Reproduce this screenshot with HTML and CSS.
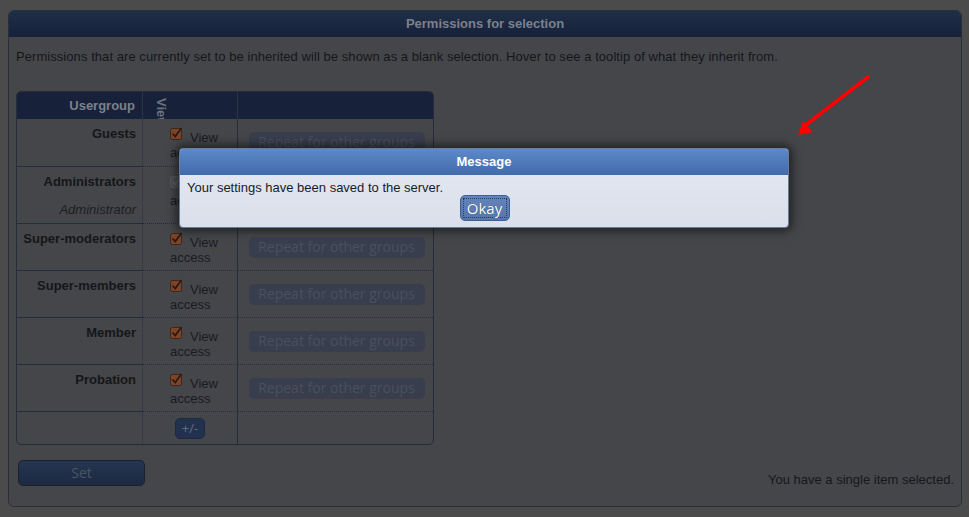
FILE: index.html
```html
<!DOCTYPE html>
<html>
<head>
<meta charset="utf-8">
<title>Permissions</title>
<link rel="stylesheet" href="styles.css">
</head>
<body>
<div class="panel">
  <div class="panel-head">Permissions for selection</div>
  <div class="panel-body">
    <p class="desc">Permissions that are currently set to be inherited will be shown as a blank selection. Hover to see a tooltip of what they inherit from.</p>
    <div class="table-wrap">
      <table class="perm">
        <colgroup><col class="w1"><col class="w2"><col class="w3"></colgroup>
        <thead>
          <tr><th class="c1">Usergroup</th><th class="c2"><div class="vert">View access</div></th><th class="c3"></th></tr>
        </thead>
        <tbody>
          <tr class="std">
            <td class="c1"><b>Guests</b></td>
            <td class="c2"><span class="cb"><svg viewBox="0 0 13 13" width="13" height="13"><rect x="0.5" y="1.5" width="11" height="11" rx="2" fill="#7e4427" stroke="#3d2517"/><path d="M2.5 6.5 L5.2 9.5 L11.5 1" fill="none" stroke="#2a1a12" stroke-width="1.8"/></svg></span>View access</td>
            <td class="c3"><span class="rep">Repeat for other groups</span></td>
          </tr>
          <tr class="admin">
            <td class="c1"><b>Administrators</b><div class="sub">Administrator</div></td>
            <td class="c2"><span class="cb"><svg viewBox="0 0 13 13" width="13" height="13"><rect x="0.5" y="1.5" width="11" height="11" rx="2" fill="#4d4f53" stroke="#57595e"/><path d="M2.5 6.5 L5.2 9.5 L11.5 1" fill="none" stroke="#5d5f64" stroke-width="1.8"/></svg></span>View access</td>
            <td class="c3"><span class="rep">Repeat for other groups</span></td>
          </tr>
          <tr class="std">
            <td class="c1"><b>Super-moderators</b></td>
            <td class="c2"><span class="cb"><svg viewBox="0 0 13 13" width="13" height="13"><rect x="0.5" y="1.5" width="11" height="11" rx="2" fill="#7e4427" stroke="#3d2517"/><path d="M2.5 6.5 L5.2 9.5 L11.5 1" fill="none" stroke="#2a1a12" stroke-width="1.8"/></svg></span>View access</td>
            <td class="c3"><span class="rep">Repeat for other groups</span></td>
          </tr>
          <tr class="std">
            <td class="c1"><b>Super-members</b></td>
            <td class="c2"><span class="cb"><svg viewBox="0 0 13 13" width="13" height="13"><rect x="0.5" y="1.5" width="11" height="11" rx="2" fill="#7e4427" stroke="#3d2517"/><path d="M2.5 6.5 L5.2 9.5 L11.5 1" fill="none" stroke="#2a1a12" stroke-width="1.8"/></svg></span>View access</td>
            <td class="c3"><span class="rep">Repeat for other groups</span></td>
          </tr>
          <tr class="std">
            <td class="c1"><b>Member</b></td>
            <td class="c2"><span class="cb"><svg viewBox="0 0 13 13" width="13" height="13"><rect x="0.5" y="1.5" width="11" height="11" rx="2" fill="#7e4427" stroke="#3d2517"/><path d="M2.5 6.5 L5.2 9.5 L11.5 1" fill="none" stroke="#2a1a12" stroke-width="1.8"/></svg></span>View access</td>
            <td class="c3"><span class="rep">Repeat for other groups</span></td>
          </tr>
          <tr class="std">
            <td class="c1"><b>Probation</b></td>
            <td class="c2"><span class="cb"><svg viewBox="0 0 13 13" width="13" height="13"><rect x="0.5" y="1.5" width="11" height="11" rx="2" fill="#7e4427" stroke="#3d2517"/><path d="M2.5 6.5 L5.2 9.5 L11.5 1" fill="none" stroke="#2a1a12" stroke-width="1.8"/></svg></span>View access</td>
            <td class="c3"><span class="rep">Repeat for other groups</span></td>
          </tr>
          <tr class="last">
            <td class="c1"></td>
            <td class="c2 mid"><span class="pm">+/-</span></td>
            <td class="c3"></td>
          </tr>
        </tbody>
      </table>
    </div>
    <div class="footer">
      <span class="set">Set</span>
      <span class="status">You have a single item selected.</span>
    </div>
  </div>
</div>

<div class="dialog">
  <div class="dialog-head">Message</div>
  <div class="dialog-body">
    <p class="msg">Your settings have been saved to the server.</p>
    <div class="dialog-actions"><span class="okay"><span class="focus">Okay</span></span></div>
  </div>
</div>

<svg class="arrow" width="90" height="70" viewBox="0 0 90 70">
  <line x1="78" y1="6" x2="13" y2="56" stroke="#ff0000" stroke-width="3.5" stroke-linecap="round"/>
  <polygon points="8,64 13,50 23,61" fill="#ff0000"/>
</svg>
</body>
</html>
```

FILE: styles.css
```css
* { box-sizing: border-box; }
html, body { margin: 0; padding: 0; }
body {
  background: #4b4b4c;
  font-family: "Liberation Sans", Arial, sans-serif;
  font-size: 13px;
  color: #151619;
  width: 969px;
  height: 517px;
  overflow: hidden;
  position: relative;
}
.panel {
  margin: 10px 7px 0 8px;
  height: 497px;
  border: 1px solid #2a2e36;
  border-radius: 6px;
  background: #45464a;
  overflow: hidden;
}
.panel-head {
  height: 26px;
  background: linear-gradient(#1f2e47, #16213a);
  color: #7b818c;
  font-weight: bold;
  text-align: center;
  line-height: 25px;
  font-size: 13px;
}
.panel-body {
  padding: 0 7px;
}
.desc {
  margin: 12px 0 0 0;
  line-height: 15px;
  letter-spacing: 0.06px;
}
.table-wrap {
  margin-top: 27px;
  width: 418px;
  border: 1px solid #262c38;
  border-radius: 5px;
  overflow: hidden;
}
.perm {
  width: 100%;
  table-layout: fixed;
  border-collapse: separate;
  border-spacing: 0;
}
.w1 { width: 126px; }
.w2 { width: 95px; }
.perm thead tr { height: 27px; }
.perm th {
  background: #17223a;
  color: #7b818c;
  font-weight: bold;
  padding: 0;
  vertical-align: middle;
}
.perm th.c1 { text-align: right; padding-right: 7px; border-right: 1px solid #2a3445; }
.perm th.c2 { border-right: 1px solid #2a3445; text-align: left; vertical-align: top; }
.vert {
  writing-mode: vertical-rl;
  white-space: nowrap;
  height: 21px;
  overflow: hidden;
  margin: 6px 0 0 12px;
  color: #6c727d;
  line-height: 12px;
  font-size: 13px;
}
.perm td {
  padding: 0;
  vertical-align: top;
  border-top: 1px solid #262c38;
}
.perm td.c1 {
  text-align: right;
  padding: 7px 6px 0 0;
  border-right: 1px dotted #2a3040;
  line-height: 15px;
}
.perm td.c2 {
  padding: 8px 8px 0 27px;
  border-right: 1px solid #262c38;
  border-top-style: dotted;
  line-height: 15px;
  color: #1a1b1e;
}
.perm td.c3 {
  vertical-align: middle;
  text-align: center;
  border-top-style: dotted;
  padding-left: 2px;
}
.perm thead + tbody tr:first-child td { border-top: none; }
.perm tr.std { height: 47px; }
.perm tr.admin { height: 57px; }
.perm tr.last { height: 33px; }
.sub {
  font-style: italic;
  margin-top: 13px;
  color: #1d1e22;
}
.cb {
  display: inline-block;
  width: 13px;
  height: 13px;
  margin-right: 7px;
  vertical-align: 2px;
}
.cb svg { display: block; }
.rep {
  display: inline-block;
  width: 176px;
  height: 21px;
  border-radius: 5px;
  background: #383e4d;
  color: #4a505e;
  font-family: "Open Sans", sans-serif;
  font-size: 14px;
  line-height: 20px;
  text-align: center;
}
.perm td.mid { text-align: left; padding: 6px 0 0 32px; vertical-align: top; }
.pm {
  display: inline-block;
  width: 30px;
  height: 21px;
  border-radius: 5px;
  background: #22314e;
  border: 1px solid #1c2942;
  color: #636d7e;
  text-align: center;
  line-height: 19px;
  font-family: "Open Sans", sans-serif;
  font-size: 13px;
}
.footer {
  display: flex;
  justify-content: space-between;
  align-items: flex-end;
  margin-top: 15px;
  padding-left: 2px;
}
.set {
  width: 127px;
  height: 26px;
  border-radius: 5px;
  background: linear-gradient(#263651, #1b2941);
  border: 1px solid #1a2030;
  color: #4c5464;
  font-family: "Open Sans", sans-serif;
  font-size: 14px;
  text-align: center;
  line-height: 24px;
}
.status {
  color: #16171a;
  line-height: 15px;
  margin-bottom: -1px;
}
.dialog {
  position: absolute;
  left: 179px;
  top: 148px;
  width: 610px;
  height: 80px;
  border: 1px solid #6b7c98;
  border-radius: 4px;
  overflow: hidden;
  box-shadow: 0 0 10px 3px rgba(0,0,0,0.55);
  background: linear-gradient(#e4e9f2, #dae0eb);
}
.dialog-head {
  height: 26px;
  background: linear-gradient(#5c89ca, #416ba9);
  color: #ffffff;
  font-weight: bold;
  text-align: center;
  line-height: 25px;
  font-size: 13px;
}
.dialog-body { padding: 6px 7px 0 7px; }
.msg {
  margin: 0;
  color: #171b28;
  line-height: 14px;
}
.dialog-actions {
  display: flex;
  justify-content: center;
  margin-top: 0;
  padding-left: 1px;
}
.okay {
  display: inline-block;
  width: 50px;
  height: 26px;
  border-radius: 5px;
  background: linear-gradient(#6384bb, #5577ad);
  border: 1px solid #3f5f93;
  padding: 2px;
}
.focus {
  display: block;
  height: 100%;
  border: 1px dotted #2a3a58;
  color: #ffffff;
  font-family: "Open Sans", sans-serif;
  font-size: 15px;
  line-height: 18px;
  text-align: center;
  text-shadow: 0 0 1px #2a3a58;
}
.arrow {
  position: absolute;
  left: 790px;
  top: 71px;
}
```
